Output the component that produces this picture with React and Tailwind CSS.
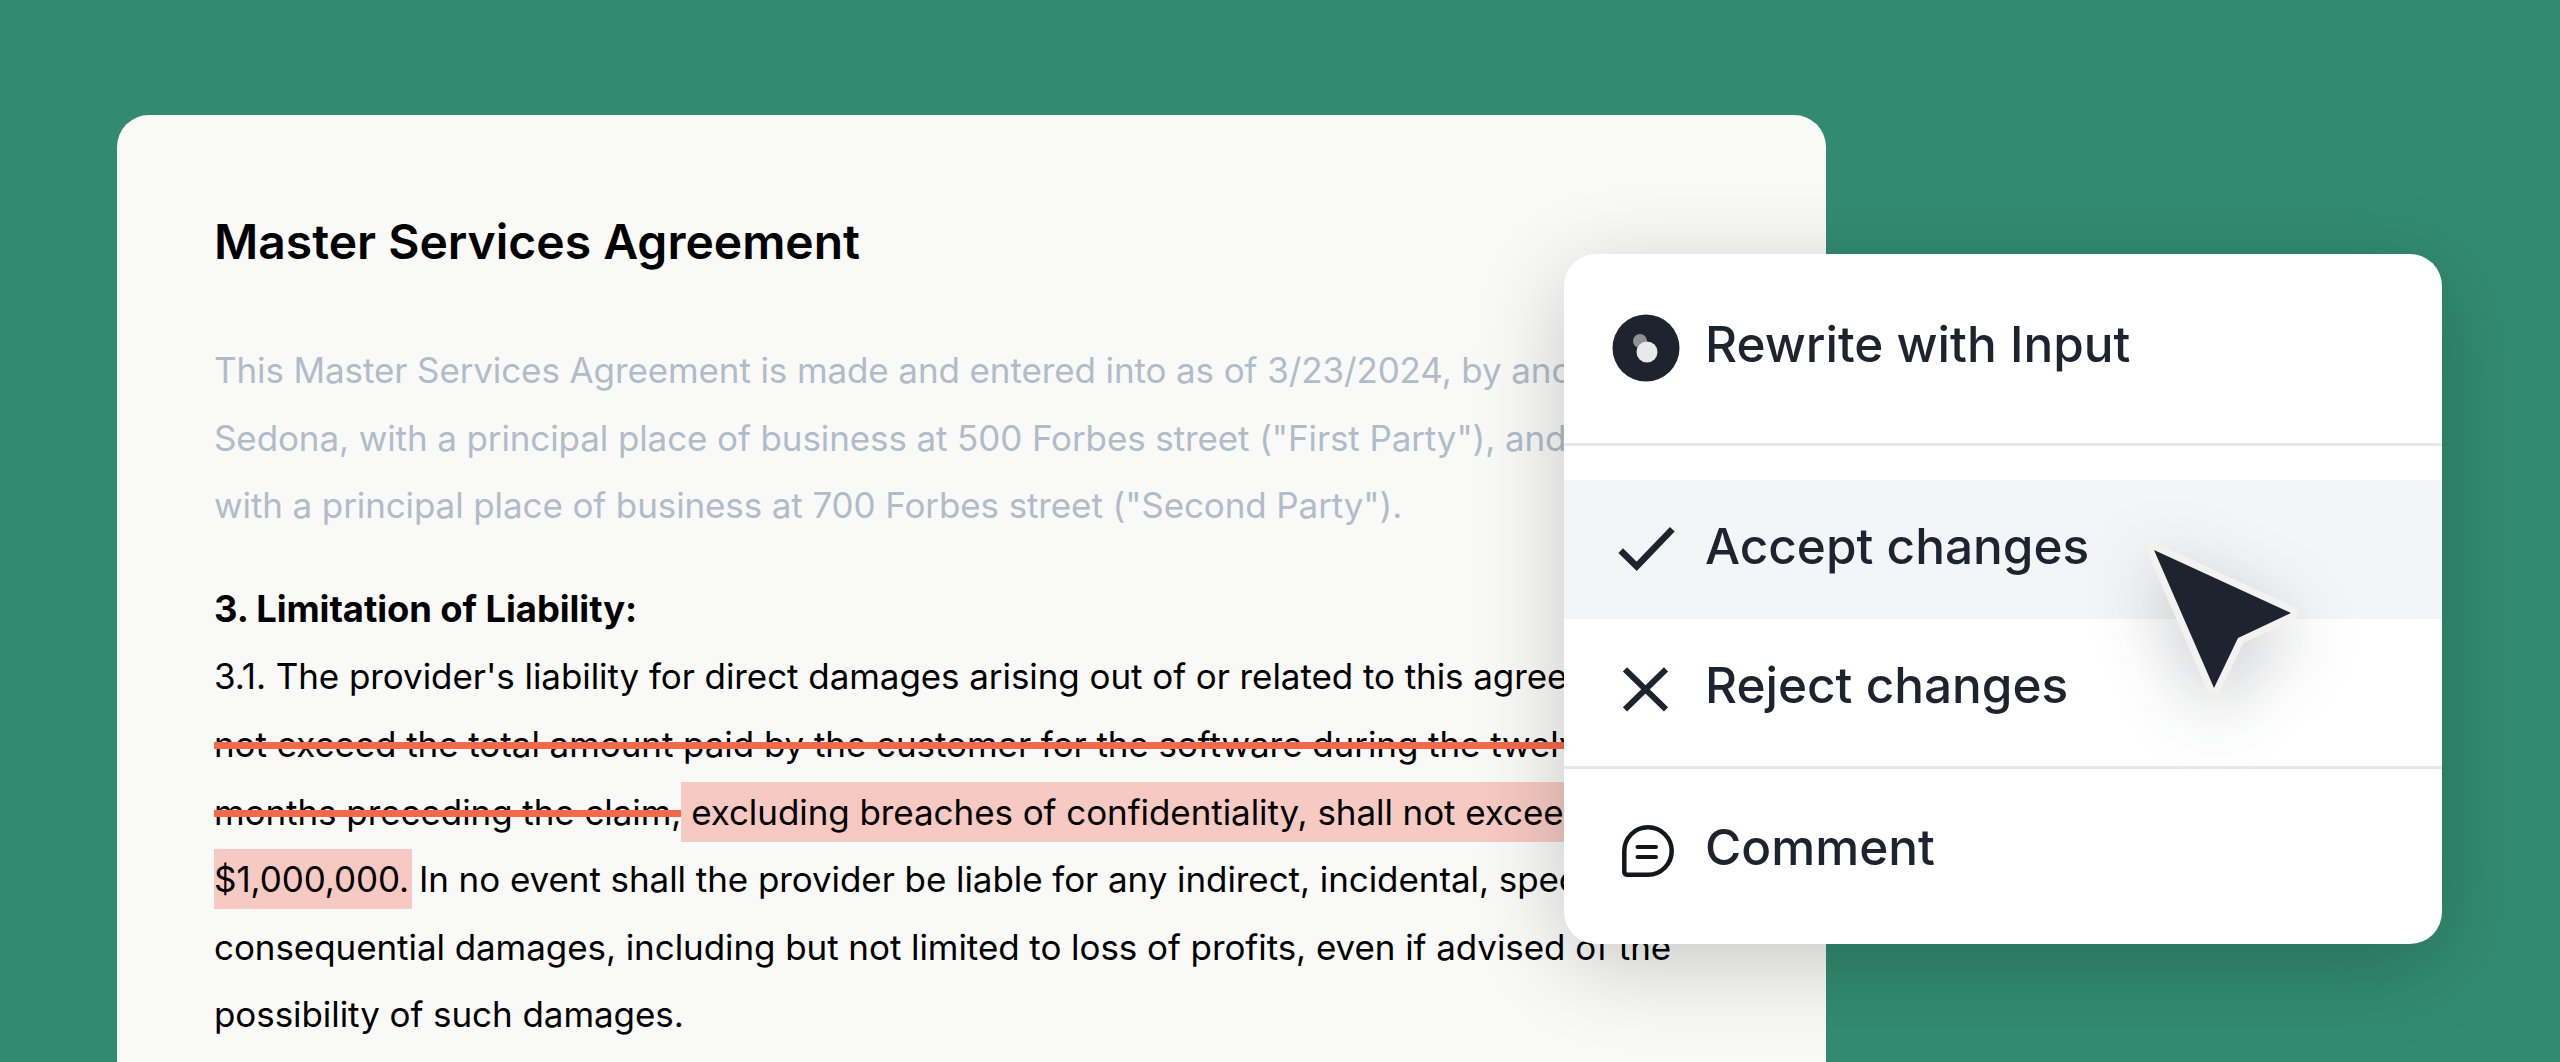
function InputLogo() {
  return (
    <svg width="68" height="68" viewBox="0 0 68 68" className="shrink-0">
      <circle cx="34" cy="34" r="33.5" fill="#1e2330" />
      <circle cx="28" cy="27" r="7" fill="#8e9196" />
      <circle cx="35" cy="38" r="10.5" fill="#e8e9ea" />
    </svg>
  );
}

function CheckIcon() {
  return (
    <svg width="68" height="68" viewBox="0 0 68 68" fill="none" stroke="#1e2330" strokeWidth="6.6" className="shrink-0">
      <path d="M8.7 34.7 24.7 50.3 60.3 13.3" />
    </svg>
  );
}

function CrossIcon() {
  return (
    <svg width="68" height="68" viewBox="0 0 68 68" fill="none" stroke="#1e2330" strokeWidth="6" className="shrink-0">
      <path d="M13 13.3 54 53.3M54 13.3 13 53.3" />
    </svg>
  );
}

function CommentIcon() {
  return (
    <svg width="52" height="52" viewBox="0 0 52 52" fill="none" stroke="#14161c" strokeWidth="4.5" className="shrink-0">
      <path d="M2.3 47V26A23.7 23.7 0 1 1 26 49.7H5a3 3 0 0 1-2.7-2.7z" strokeLinejoin="round" />
      <path d="M15.5 22H34M15.5 32H34" strokeWidth="4" strokeLinecap="round" />
    </svg>
  );
}

function Cursor() {
  return (
    <svg width="170" height="170" viewBox="0 0 170 170" className="absolute left-[2140px] top-[536px] drop-shadow-[0_20px_36px_rgba(30,35,48,0.24)]">
      <path d="M14 14 151 77 98 102 74 152z" fill="#1e2330" stroke="#f3f2ee" strokeWidth="14" strokeLinejoin="round" paintOrder="stroke" />
    </svg>
  );
}

export default function App() {
  return (
    <div className="relative h-[1062px] w-[2560px] overflow-hidden bg-[#328b70] font-['Inter',sans-serif]">
      <div className="ml-[117px] mt-[115px] h-[1000px] w-[1709px] rounded-[32px] bg-[#f9f9f7] pl-[97px] pt-[93px] text-[35px] leading-[67.6px] text-black">
        <h1 className="text-[48px] font-semibold leading-[68px]">Master Services Agreement</h1>

        <div className="mt-[61px] whitespace-nowrap tracking-[-0.11px] text-[#b0bcc9]">
          <p>This Master Services Agreement is made and entered into as of 3/23/2024, by and between</p>
          <p>Sedona, with a principal place of business at 500 Forbes street ("First Party"), and Input,</p>
          <p>with a principal place of business at 700 Forbes street ("Second Party").</p>
        </div>

        <div className="mt-[36px] whitespace-nowrap tracking-[-0.07px]">
          <p className="text-[36.4px] font-bold">3. Limitation of Liability:</p>
          <p>3.1. The provider's liability for direct damages arising out of or related to this agreement shall</p>
          <p className="line-through decoration-[#f4694a] decoration-[7px]">not exceed the total amount paid by the customer for the software during the twelve</p>
          <p>
            <span className="line-through decoration-[#f4694a] decoration-[7px]">months preceding the claim,</span>
            <span className="bg-[#f6c9c2] py-[9px]"> excluding breaches of confidentiality, shall not exceed</span>
          </p>
          <p>
            <span className="-mr-[3px] bg-[#f6c9c2] py-[9px] pr-[3px]">$1,000,000.</span> In no event shall the provider be liable for any indirect, incidental, special or
          </p>
          <p>consequential damages, including but not limited to loss of profits, even if advised of the</p>
          <p>possibility of such damages.</p>
        </div>
      </div>

      <div className="absolute left-[1564px] top-[254px] w-[878px] rounded-[32px] bg-white text-[49.5px] font-medium text-[#1e2330] shadow-[0_20px_90px_rgba(0,0,0,0.2)]">
        <div className="flex h-[192px] items-center gap-[25px] border-b-[3px] border-[#e7e7ec] pb-[1px] pl-[48px]">
          <InputLogo />
          <span className="pb-[8px]">Rewrite with Input</span>
        </div>
        <div className="pt-[34px]">
          <div className="flex h-[139px] items-center gap-[25px] bg-[#f4f5f7] pl-[48px]">
            <CheckIcon />
            <span className="pb-[6px]">Accept changes</span>
          </div>
          <div className="flex h-[147px] items-center gap-[25px] pb-[6px] pl-[48px]">
            <CrossIcon />
            <span className="pb-[8px]">Reject changes</span>
          </div>
        </div>
        <div className="flex h-[178px] items-center gap-[31px] border-t-[3px] border-[#e7e7ec] pb-[12px] pl-[58px]">
          <CommentIcon />
          <span className="pb-[6px]">Comment</span>
        </div>
      </div>

      <Cursor />
    </div>
  );
}
